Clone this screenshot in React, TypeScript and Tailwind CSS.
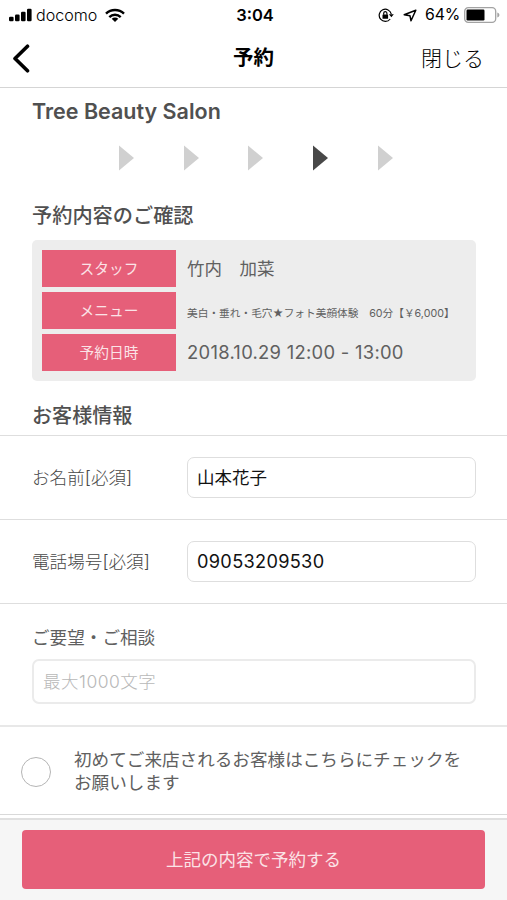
import type { ReactNode } from 'react'

interface SummaryItem {
  label: string
  value: string
  valueClass: string
}

const steps = [false, false, false, true, false]

const summary: SummaryItem[] = [
  { label: 'スタッフ', value: '竹内　加菜', valueClass: 'pt-px text-[17.5px]' },
  {
    label: 'メニュー',
    value: '美白・垂れ・毛穴★フォト美顔体験　60分【￥6,000】',
    valueClass: 'pt-[7px] text-[10.7px]',
  },
  { label: '予約日時', value: '2018.10.29 12:00 - 13:00', valueClass: 'text-[18.4px] tracking-[0.28px]' },
]

function StatusBar() {
  return (
    <div className="grid h-[30px] grid-cols-3 items-center text-[16px] text-black">
      <div className="flex items-center pl-[9px]">
        <svg width="23" height="14" viewBox="0 0 23 14" className="shrink-0">
          <rect x="0" y="8.8" width="4.6" height="4.4" rx="1.2" />
          <rect x="6" y="6.6" width="4.6" height="6.6" rx="1.2" />
          <rect x="12" y="3.8" width="4.6" height="9.4" rx="1.2" />
          <rect x="18" y="0.7" width="4.6" height="12.5" rx="1.2" />
        </svg>
        <span className="ml-[4px] text-[16.1px] font-light">docomo</span>
        <svg width="20" height="15" viewBox="0 0 20 15" className="ml-[8px] shrink-0" fill="none" stroke="#000" strokeWidth="2.4">
          <path d="M1 5.6C6 0.7 14 0.7 19 5.6" />
          <path d="M4.3 9.1C7.5 6 12.5 6 15.7 9.1" />
          <path d="M10 14L6.7 10.8C8.6 9.1 11.4 9.1 13.3 10.8Z" fill="#000" stroke="none" />
        </svg>
      </div>
      <div className="pl-[3px] text-center text-[16.5px] font-semibold">3:04</div>
      <div className="flex items-center justify-end pr-[7px]">
        <svg width="16" height="15" viewBox="0 0 16 15" className="shrink-0" fill="none" stroke="#000" strokeWidth="1.2">
          <path d="M13.3 6.2A6.1 6.1 0 1 0 12.2 11" />
          <path d="M10.9 6.2L15.8 6.2L13.4 9.2Z" fill="#000" stroke="none" />
          <rect x="4.5" y="6.6" width="5.6" height="4.2" rx="0.5" fill="#000" stroke="none" />
          <path d="M5.7 6.8V5.2a1.6 1.6 0 0 1 3.2 0v1.6" />
        </svg>
        <svg width="14" height="13" viewBox="0 0 14 13" className="ml-[9px] shrink-0" fill="none" stroke="#000" strokeWidth="1.5" strokeLinejoin="round">
          <path d="M12.8 1.2L1.2 5.8L7 6.8L8 11.8Z" />
        </svg>
        <span className="ml-[8px] text-[15.8px] tracking-[-0.2px]">64%</span>
        <svg width="36" height="16" viewBox="0 0 36 16" className="ml-[4px] shrink-0">
          <rect x="0.7" y="0.7" width="31" height="14.6" rx="3.6" fill="none" stroke="#a3a3a3" strokeWidth="1.3" />
          <rect x="2.5" y="2.5" width="18" height="11" rx="1.2" />
          <path d="M33.3 5.5C36.1 6.2 36.1 9.8 33.3 10.5Z" fill="#a3a3a3" />
        </svg>
      </div>
    </div>
  )
}

function FormRow({ label, children }: { label: string, children: ReactNode }) {
  return (
    <div className="flex h-[84px] items-center border-b border-[#dedede] pr-[31px] pl-[32px]">
      <label className="w-[155px] shrink-0 text-[17.6px] font-light text-[#484848]">{label}</label>
      {children}
    </div>
  )
}

export default function App() {
  return (
    <div className="flex h-[900px] w-[507px] flex-col overflow-hidden bg-white font-['Inter','Noto_Sans_CJK_JP',sans-serif] leading-none text-[#505050]">
      <StatusBar />

      <header className="grid h-[58px] grid-cols-3 items-center border-b border-[#d5d5d5] text-black">
        <svg width="18" height="29" viewBox="0 0 18 29" className="ml-[12px]" fill="none" stroke="#000" strokeWidth="3.6" strokeLinecap="round" strokeLinejoin="round">
          <path d="M15.5 2.2L3 14.5L15.5 26.8" />
        </svg>
        <h1 className="text-center text-[20.5px] font-bold">予約</h1>
        <button className="pr-[23px] pb-px text-right text-[21px] font-light">閉じる</button>
      </header>

      <main className="flex flex-col">
        <h2 className="flex h-[46px] items-center pt-px pl-[32px] text-[21.5px] font-semibold">Tree Beauty Salon</h2>

        <div className="flex h-[49px] items-center gap-[49.7px] pb-px pl-[119px]">
          {steps.map((active, i) => (
            <svg key={i} width="15" height="26" viewBox="0 0 15 26" className={active ? 'fill-[#484848]' : 'fill-[#d0d0d0]'}>
              <path d="M0 0.5L15 13L0 25.5Z" />
            </svg>
          ))}
        </div>

        <h3 className="flex h-[57px] items-center pt-[9px] pl-[32px] text-[20.2px] font-medium">予約内容のご確認</h3>

        <section className="mr-[31px] ml-[32px] flex h-[141px] flex-col gap-[5px] rounded-[5px] bg-[#ededed] px-[10px] pt-[10px]">
          {summary.map(item => (
            <div key={item.label} className="flex h-[37px] items-center gap-[11px]">
              <div className="flex h-full w-[134px] shrink-0 items-center justify-center bg-[#e65f79] pt-[2px] text-[14.7px] text-[#fbe3e7]">
                {item.label}
              </div>
              <div className={`whitespace-nowrap text-[#606060] ${item.valueClass}`}>{item.value}</div>
            </div>
          ))}
        </section>

        <h3 className="flex h-[55px] items-center border-b border-[#dedede] pt-[17px] pl-[32px] text-[20.1px] font-medium">お客様情報</h3>

        <FormRow label="お名前[必須]">
          <input
            defaultValue="山本花子"
            className="h-[41px] w-full min-w-0 rounded-[7px] border border-[#dedede] px-[9px] pb-[2px] text-[17.5px] text-[#111]"
          />
        </FormRow>
        <FormRow label="電話場号[必須]">
          <input
            defaultValue="09053209530"
            className="h-[41px] w-full min-w-0 rounded-[7px] border border-[#dedede] px-[9px] pb-[2px] text-[18.2px] tracking-[0.3px] text-[#111]"
          />
        </FormRow>

        <div className="flex h-[123px] flex-col border-b-2 border-[#e8e8e8] pt-[25px] pr-[31px] pl-[32px]">
          <label className="h-[18px] text-[17.6px] text-[#606060]">ご要望・ご相談</label>
          <input
            placeholder="最大1000文字"
            className="mt-[12px] h-[45px] w-full rounded-[7px] border-2 border-[#ebebeb] px-[9px] text-[17.5px] font-light tracking-[0.5px] placeholder:text-[#b8b8b8]"
          />
        </div>

        <div className="flex h-[88px] items-center border-b border-[#d9d9d9] pl-[21px]">
          <span className="mt-[3px] size-[30px] shrink-0 rounded-full border border-[#b5b5b5]" />
          <p className="ml-[23px] text-[17.6px] leading-[23px] text-[#606060]">
            初めてご来店されるお客様はこちらにチェックを
            <br />
            お願いします
          </p>
        </div>
      </main>

      <footer className="mt-[3px] flex-1 border-t-2 border-[#e0e0e0] bg-[#f6f6f6] px-[22px] pt-[10px]">
        <button className="h-[59px] w-full rounded-[4px] bg-[#e65f79] text-[17.5px] text-[#fbe3e7]">上記の内容で予約する</button>
      </footer>
    </div>
  )
}
